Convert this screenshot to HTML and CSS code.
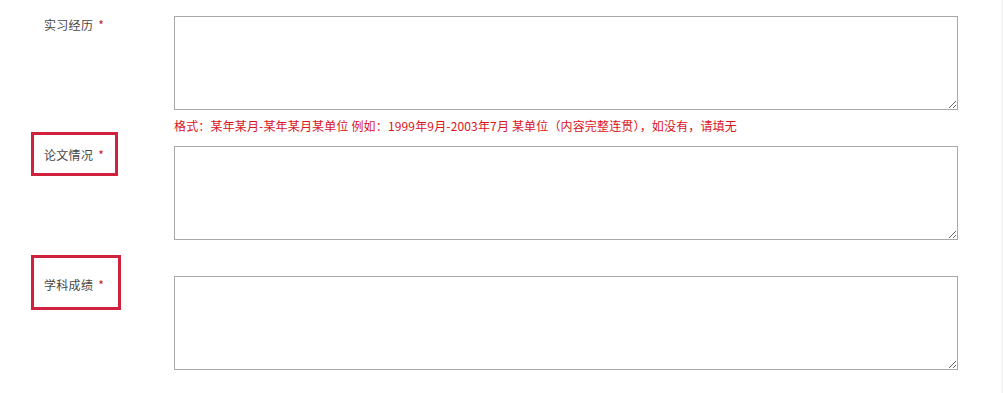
FILE: index.html
```html
<!DOCTYPE html>
<html lang="zh-CN">
<head>
<meta charset="utf-8">
<title>表单</title>
<link rel="stylesheet" href="styles.css">
</head>
<body>
<div class="page">
  <form class="form">
    <div class="row">
      <label class="label">实习经历 <span class="req">*</span></label>
      <div class="field">
        <textarea class="input"></textarea>
        <p class="hint">格式：某年某月-某年某月某单位 例如：1999年9月-2003年7月 某单位（内容完整连贯），如没有，请填无</p>
      </div>
    </div>
    <div class="row">
      <label class="label">论文情况 <span class="req">*</span></label>
      <div class="field">
        <textarea class="input"></textarea>
      </div>
    </div>
    <div class="row row-gap">
      <label class="label">学科成绩 <span class="req">*</span></label>
      <div class="field">
        <textarea class="input"></textarea>
      </div>
    </div>
  </form>
  <div class="mark mark-1"></div>
  <div class="mark mark-2"></div>
</div>
</body>
</html>
```
FILE: styles.css
```css
html, body {
  margin: 0;
  padding: 0;
}
body {
  background: #f5f5f5;
  font-family: "Noto Sans CJK SC", "Liberation Sans", sans-serif;
  font-size: 12px;
  color: #444;
}
.page {
  position: relative;
  width: 1001px;
  height: 393px;
  background: #ffffff;
  overflow: hidden;
}
.form {
  padding-top: 16px;
}
.row {
  display: grid;
  grid-template-columns: 174px 784px;
}
.row-gap {
  margin-top: 36px;
}
.label {
  padding-left: 44px;
  padding-top: 1px;
  line-height: 16px;
  color: #484848;
  letter-spacing: 0.3px;
}
.req {
  margin-left: 2px;
  color: #c8202c;
}
.field {
  display: flex;
  flex-direction: column;
}
.input {
  display: block;
  box-sizing: border-box;
  width: 784px;
  height: 94px;
  margin: 0;
  padding: 2px;
  border: 1px solid #a9a9a9;
  background: #fff;
  font-family: inherit;
}
.hint {
  margin: 8px 0 12px;
  line-height: 16px;
  color: #d8141c;
  white-space: nowrap;
  letter-spacing: 0.16px;
}
.mark {
  position: absolute;
  box-sizing: border-box;
  border: 3px solid #d0213f;
}
.mark-1 {
  left: 31px;
  top: 132px;
  width: 87px;
  height: 44px;
}
.mark-2 {
  left: 31px;
  top: 255px;
  width: 90px;
  height: 55px;
}
```
